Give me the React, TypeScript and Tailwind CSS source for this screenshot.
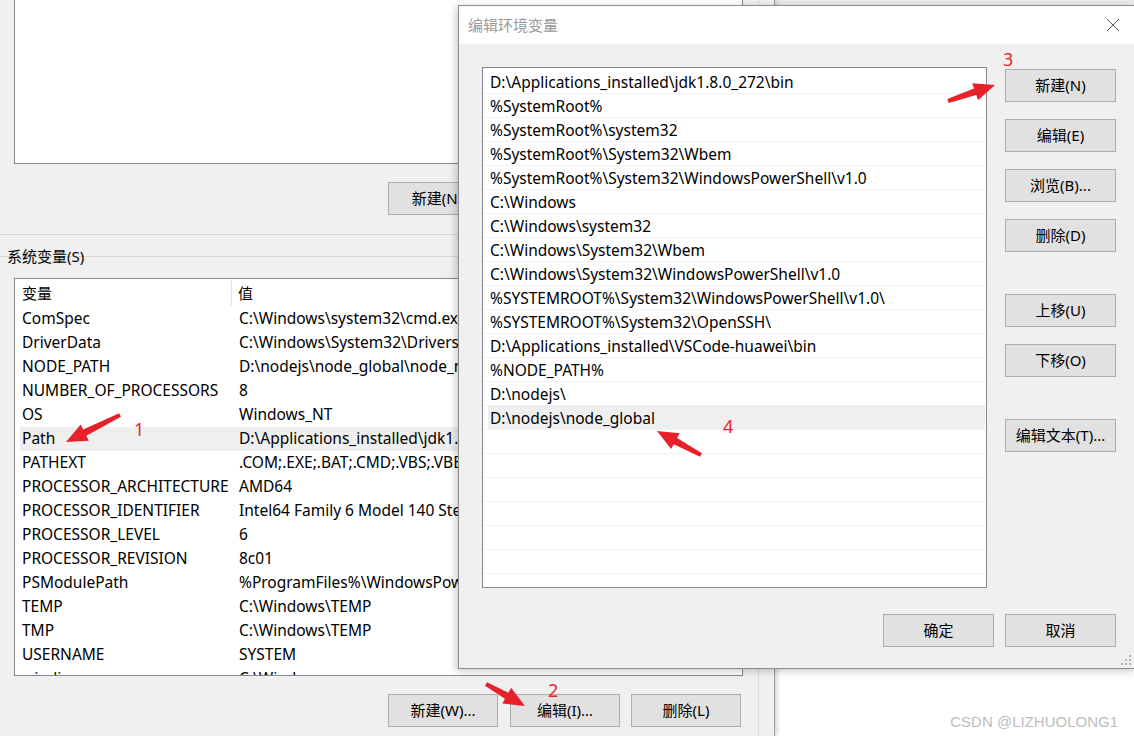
import React from 'react';

const sysVars: [string, string][] = [
  ['ComSpec', 'C:\\Windows\\system32\\cmd.exe'],
  ['DriverData', 'C:\\Windows\\System32\\Drivers\\DriverData'],
  ['NODE_PATH', 'D:\\nodejs\\node_global\\node_modules'],
  ['NUMBER_OF_PROCESSORS', '8'],
  ['OS', 'Windows_NT'],
  ['Path', 'D:\\Applications_installed\\jdk1.8.0_272\\bin;%SystemRoot%'],
  ['PATHEXT', '.COM;.EXE;.BAT;.CMD;.VBS;.VBE;.JS;.JSE;.WSF;.WSH;.MSC'],
  ['PROCESSOR_ARCHITECTURE', 'AMD64'],
  ['PROCESSOR_IDENTIFIER', 'Intel64 Family 6 Model 140 Stepping 1, GenuineIntel'],
  ['PROCESSOR_LEVEL', '6'],
  ['PROCESSOR_REVISION', '8c01'],
  ['PSModulePath', '%ProgramFiles%\\WindowsPowerShell\\Modules;%SystemRoot%'],
  ['TEMP', 'C:\\Windows\\TEMP'],
  ['TMP', 'C:\\Windows\\TEMP'],
  ['USERNAME', 'SYSTEM'],
  ['windir', 'C:\\Windows'],
];

const pathEntries = [
  'D:\\Applications_installed\\jdk1.8.0_272\\bin',
  '%SystemRoot%',
  '%SystemRoot%\\system32',
  '%SystemRoot%\\System32\\Wbem',
  '%SystemRoot%\\System32\\WindowsPowerShell\\v1.0',
  'C:\\Windows',
  'C:\\Windows\\system32',
  'C:\\Windows\\System32\\Wbem',
  'C:\\Windows\\System32\\WindowsPowerShell\\v1.0',
  '%SYSTEMROOT%\\System32\\WindowsPowerShell\\v1.0\\',
  '%SYSTEMROOT%\\System32\\OpenSSH\\',
  'D:\\Applications_installed\\VSCode-huawei\\bin',
  '%NODE_PATH%',
  'D:\\nodejs\\',
  'D:\\nodejs\\node_global',
  '', '', '', '', '', '', '', '',
];

const Btn = ({ label, className = '' }: { label: string; className?: string }) => (
  <div
    className={`flex h-[33px] shrink-0 items-center justify-center border border-[#adadad] bg-[#e1e1e1] text-[15px] text-black ${className}`}
  >
    {label}
  </div>
);

// tapered red arrow, from tail to tip
const arrowPoints = (x1: number, y1: number, x2: number, y2: number) => {
  const dx = x2 - x1;
  const dy = y2 - y1;
  const len = Math.hypot(dx, dy);
  const ux = dx / len;
  const uy = dy / len;
  const nx = -uy;
  const ny = ux;
  const bx = x2 - ux * 21;
  const by = y2 - uy * 21;
  const pts = [
    [x1 + nx * 2, y1 + ny * 2],
    [bx + nx * 3.5, by + ny * 3.5],
    [bx + nx * 9, by + ny * 9],
    [x2, y2],
    [bx - nx * 9, by - ny * 9],
    [bx - nx * 3.5, by - ny * 3.5],
    [x1 - nx * 2, y1 - ny * 2],
  ];
  return pts.map((p) => p.join(',')).join(' ');
};

export default function App() {
  return (
    <div className="relative h-[736px] w-[1134px] overflow-hidden bg-[#f0f0f0] font-['Noto_Sans','Noto_Sans_CJK_SC',sans-serif] text-[15.5px] text-black">
      <div className="flex h-full">
        {/* background: environment variables window */}
        <div className="relative z-10 flex h-full w-[775px] shrink-0 border-r border-[#9a9a9a] shadow-[2px_0_5px_rgba(0,0,0,0.18)]">
          <div className="w-[759px] shrink-0 border-r border-[#dcdcdc]">
            <div className="ml-[14px] h-[164px] w-[729px] border-x border-b border-[#828790] bg-white" />
            <div className="mt-[18px] flex pl-[388px]">
              <Btn label="新建(N)..." className="w-[110px]" />
            </div>
            <div className="mt-[19px] h-px bg-[#d8d8d8]" />
            <div className="relative mt-[10px] h-[23px]">
              <div className="absolute left-0 right-0 top-[11px] h-px bg-[#d8d8d8]" />
              <span className="relative pl-[7px] text-[15px] leading-[23px]">系统变量(S)</span>
            </div>
            <div className="ml-[14px] mt-[10px] h-[398px] w-[729px] overflow-hidden border border-[#828790] bg-white">
              <div className="flex h-[28px] items-center text-[15px]">
                <div className="flex h-[26px] w-[217px] shrink-0 items-center border-r border-[#e5e5e5] pl-[7px]">变量</div>
                <div className="pl-[6px]">值</div>
              </div>
              {sysVars.map(([name, value]) => (
                <div
                  key={name}
                  className={`ml-[5px] flex h-[24px] items-center whitespace-nowrap ${name === 'Path' ? 'bg-[#efefef]' : ''}`}
                >
                  <div className="w-[212px] shrink-0 pl-[2px]">{name}</div>
                  <div className="pl-[7px]">{value}</div>
                </div>
              ))}
            </div>
            <div className="mt-[18px] flex pl-[388px]">
              <Btn label="新建(W)..." className="w-[110px]" />
              <Btn label="编辑(I)..." className="ml-[12px] w-[110px]" />
              <Btn label="删除(L)" className="ml-[11px] w-[110px]" />
            </div>
          </div>
        </div>
        {/* another window behind on the right */}
        <div className="flex-1 bg-white">
          <div className="h-[5px] bg-[#ececec]" />
        </div>
      </div>

      {/* edit environment variable dialog */}
      <div className="absolute left-[458px] top-[5px] z-20 flex h-[664px] w-[678px] flex-col border border-[#8d8d8d] bg-[#f0f0f0] shadow-[-2px_2px_8px_rgba(0,0,0,0.22)]">
        <div className="flex h-[38px] shrink-0 items-center justify-between bg-white pl-[9px] pr-[15px]">
          <span className="text-[15px] text-[#9a9a9a]">编辑环境变量</span>
          <svg width="14" height="14" viewBox="0 0 14 14">
            <path d="M1 1 L13 13 M13 1 L1 13" stroke="#5a5a5a" strokeWidth="1" fill="none" />
          </svg>
        </div>
        <div className="flex items-start">
          <div className="ml-[23px] mt-[23px] h-[521px] w-[505px] shrink-0 overflow-hidden border border-[#828790] bg-white pt-[2px]">
            {pathEntries.map((entry, i) => (
              <div key={i} className="mx-[1px] h-[24px] border-b border-[#f0f0f0]">
                {i === 14 ? (
                  <div className="ml-[4px] h-full bg-[#efefef] pl-[2px] leading-[24px]">{entry}</div>
                ) : (
                  <div className="h-full whitespace-nowrap pl-[6px] leading-[24px]">{entry}</div>
                )}
              </div>
            ))}
          </div>
          <div className="ml-[18px] mt-[25px] flex flex-col">
            <Btn label="新建(N)" className="w-[111px]" />
            <Btn label="编辑(E)" className="mt-[17px] w-[111px]" />
            <Btn label="浏览(B)..." className="mt-[17px] w-[111px]" />
            <Btn label="删除(D)" className="mt-[17px] w-[111px]" />
            <Btn label="上移(U)" className="mt-[42px] w-[111px]" />
            <Btn label="下移(O)" className="mt-[17px] w-[111px]" />
            <Btn label="编辑文本(T)..." className="mt-[42px] w-[111px]" />
          </div>
        </div>
        <div className="mt-[26px] flex justify-end gap-[11px] pr-[19px]">
          <Btn label="确定" className="w-[111px]" />
          <Btn label="取消" className="w-[111px]" />
        </div>
        <svg className="absolute bottom-[2px] right-[3px]" width="12" height="12" viewBox="0 0 12 12">
          <g fill="#b4b4b4">
            <rect x="9" y="1" width="2" height="2" />
            <rect x="5" y="5" width="2" height="2" />
            <rect x="9" y="5" width="2" height="2" />
            <rect x="1" y="9" width="2" height="2" />
            <rect x="5" y="9" width="2" height="2" />
            <rect x="9" y="9" width="2" height="2" />
          </g>
        </svg>
      </div>

      {/* red annotations */}
      <svg className="pointer-events-none absolute inset-0 z-30" width="1134" height="736">
        <g fill="#e8202a">
          <polygon points={arrowPoints(120, 415, 66, 442)} />
          <polygon points={arrowPoints(486, 684, 525, 706)} />
          <polygon points={arrowPoints(948, 101, 995, 85)} />
          <polygon points={arrowPoints(701, 455, 657, 431)} />
        </g>
      </svg>
      <div className="pointer-events-none absolute inset-0 z-30 font-['Noto_Sans',sans-serif] text-[18px] leading-none text-[#e8262b]">
        <span className="absolute left-[134px] top-[420px]">1</span>
        <span className="absolute left-[548px] top-[681px]">2</span>
        <span className="absolute left-[1003px] top-[50px]">3</span>
        <span className="absolute left-[723px] top-[417px]">4</span>
      </div>
      <div className="absolute right-[16px] top-[711px] z-30 font-['Liberation_Sans',sans-serif] text-[15px] text-[#bdbdbd]">
        CSDN @LIZHUOLONG1
      </div>
    </div>
  );
}
